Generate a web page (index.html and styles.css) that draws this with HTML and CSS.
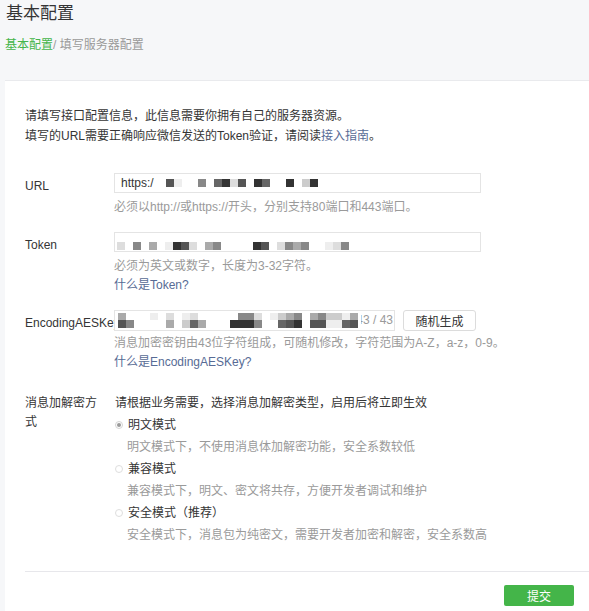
FILE: index.html
```html
<!DOCTYPE html>
<html lang="zh-CN">
<head>
<meta charset="utf-8">
<title>基本配置</title>
<link rel="stylesheet" href="styles.css">
</head>
<body>
<div class="page">
  <header class="head">
    <h2 class="title">基本配置</h2>
    <div class="crumb"><span class="crumb-home">基本配置</span>/ 填写服务器配置</div>
  </header>

  <section class="card">
    <div class="intro">
      <p>请填写接口配置信息，此信息需要你拥有自己的服务器资源。</p>
      <p>填写的URL需要正确响应微信发送的Token验证，请阅读<a class="link">接入指南</a>。</p>
    </div>

    <div class="group">
      <div class="label">URL</div>
      <div class="field">
        <div class="input input-url">
          <span class="val">https:/</span>
          <span class="strip strip-url">
            <i class="g55"></i><i class="gee"></i><i></i><i></i><i class="g88"></i><i></i><i class="g66"></i><i class="g33"></i><i class="gdd"></i><i class="g55"></i><i></i><i class="g33"></i><i class="g66"></i><i></i><i></i><i class="g33"></i><i></i><i class="gcc"></i><i class="g33"></i>
          </span>
        </div>
        <p class="hint">必须以http://或https://开头，分别支持80端口和443端口。</p>
      </div>
    </div>

    <div class="group">
      <div class="label">Token</div>
      <div class="field">
        <div class="input input-token">
          <span class="strip strip-token">
            <i class="gdd"></i><i></i><i class="g88"></i><i></i><i class="gaa"></i><i></i><i class="gee"></i><i class="g33"></i><i class="g55"></i><i class="gdd"></i><i></i><i class="gaa"></i><i class="g88"></i><i></i><i></i><i></i><i></i><i class="g33"></i><i class="g55"></i><i></i><i class="gdd"></i><i class="g88"></i><i class="gaa"></i><i class="g88"></i><i></i><i></i><i class="gee"></i><i class="gdd"></i><i class="g88"></i>
          </span>
        </div>
        <p class="hint">必须为英文或数字，长度为3-32字符。</p>
        <a class="link help">什么是Token?</a>
      </div>
    </div>

    <div class="group">
      <div class="label label-aes">EncodingAESKey</div>
      <div class="field">
        <div class="aes-row">
          <div class="input input-aes">
            <span class="strip2">
              <i class="gaa"></i><i class="g55"></i>
              <i></i><i class="g88"></i>
              <i></i><i></i>
              <i></i><i></i>
              <i class="gee"></i><i></i>
              <i></i><i></i>
              <i class="gdd"></i><i class="gaa"></i>
              <i></i><i></i>
              <i class="gee"></i><i class="gcc"></i>
              <i class="gdd"></i><i class="g66"></i>
              <i></i><i class="gaa"></i>
              <i></i><i></i>
              <i></i><i></i>
              <i></i><i></i>
              <i></i><i class="g33"></i>
              <i class="g88"></i><i class="g33"></i>
              <i class="g88"></i><i class="g33"></i>
              <i class="gdd"></i><i class="g88"></i>
              <i></i><i></i>
              <i class="gee"></i><i></i>
              <i class="gcc"></i><i class="g66"></i>
              <i class="gaa"></i><i class="g55"></i>
              <i class="g88"></i><i class="g33"></i>
              <i></i><i></i>
              <i class="gaa"></i><i class="g55"></i>
              <i class="g88"></i><i class="g55"></i>
              <i class="gcc"></i><i class="gee"></i>
              <i class="gcc"></i><i class="gee"></i>
              <i class="gee"></i><i class="g66"></i>
              <i class="gaa"></i><i class="g55"></i>
            </span>
            <span class="counter">43 / 43</span>
          </div>
          <div class="btn">随机生成</div>
        </div>
        <p class="hint hint-tight">消息加密密钥由43位字符组成，可随机修改，字符范围为A-Z，a-z，0-9。</p>
        <a class="link help">什么是EncodingAESKey?</a>
      </div>
    </div>

    <div class="group group-enc">
      <div class="label label-enc">消息加解密方式</div>
      <div class="field">
        <p class="enc-desc">请根据业务需要，选择消息加解密类型，启用后将立即生效</p>
        <div class="radio"><span class="dot dot-on"></span>明文模式</div>
        <p class="radio-desc">明文模式下，不使用消息体加解密功能，安全系数较低</p>
        <div class="radio"><span class="dot"></span>兼容模式</div>
        <p class="radio-desc">兼容模式下，明文、密文将共存，方便开发者调试和维护</p>
        <div class="radio"><span class="dot"></span>安全模式（推荐）</div>
        <p class="radio-desc">安全模式下，消息包为纯密文，需要开发者加密和解密，安全系数高</p>
      </div>
    </div>

    <div class="footer">
      <div class="submit">提交</div>
    </div>
  </section>
</div>
</body>
</html>
```

FILE: styles.css
```css
html, body {
  margin: 0;
  height: 100%;
  overflow: hidden;
  background: #f6f7f9;
}
body {
  font-family: "Liberation Sans", "Noto Sans CJK SC", sans-serif;
  font-size: 12px;
  color: #353535;
}
.head {
  padding-left: 5px;
}
.title {
  margin: 0;
  padding-left: 1px;
  font-size: 17px;
  font-weight: normal;
  line-height: 28px;
  color: #353535;
}
.crumb {
  margin-top: 7px;
  line-height: 20px;
  color: #9a9a9a;
}
.crumb-home {
  color: #44b549;
}
.card {
  margin: 25px 0 0 5px;
  background: #fff;
  border-top: 1px solid #e9eaed;
  padding: 26px 0 40px 20px;
}
.intro {
  margin-bottom: 27px;
}
.intro p {
  margin: 0;
  line-height: 19.5px;
}
.link {
  color: #576b95;
  text-decoration: none;
}
.group {
  display: flex;
}
.group + .group {
  margin-top: 15px;
}
.group.group-enc {
  margin-top: 20px;
}
.label {
  box-sizing: border-box;
  width: 89px;
  flex: none;
  padding-right: 9px;
  padding-top: 3px;
  line-height: 20px;
  color: #353535;
}
.label-aes {
  line-height: 21px;
  white-space: nowrap;
  overflow: hidden;
}
.label.label-enc {
  line-height: 19.5px;
  padding-top: 1.5px;
}
.field {
  flex: none;
}
.input {
  box-sizing: border-box;
  width: 367px;
  height: 20px;
  border: 1px solid #e4e4e4;
  background: #fff;
  display: flex;
  align-items: center;
  position: relative;
}
.input-url {
  padding-left: 6px;
}
.input-token {
  padding-left: 2px;
}
.val {
  color: #353535;
}
.strip {
  display: flex;
}
.strip i {
  display: block;
  width: 8px;
  height: 8px;
  flex: none;
}
.strip-url {
  margin-left: 12.3px;
}
.strip-token {
  align-self: flex-end;
  margin-bottom: 1px;
}
.aes-row {
  display: flex;
  gap: 8px;
}
.input-aes {
  width: 281px;
  height: 21px;
  padding-left: 3px;
}
.strip2 {
  display: grid;
  grid-template-rows: 7px 8px;
  grid-auto-flow: column;
  grid-auto-columns: 8px;
  background: #fff;
  position: relative;
  z-index: 1;
  padding-right: 3px;
}
.strip2 i {
  display: block;
}
.counter {
  position: absolute;
  right: 1px;
  top: 0;
  line-height: 19px;
  color: #9a9a9a;
}
.btn {
  box-sizing: border-box;
  width: 73px;
  height: 21px;
  border: 1px solid #dcdcdc;
  border-radius: 3px;
  background: #fff;
  display: flex;
  align-items: center;
  justify-content: center;
  color: #353535;
}
.hint {
  margin: 5px 0 0;
  line-height: 19px;
  color: #9a9a9a;
}
.hint.hint-tight {
  margin-top: 3px;
}
.help {
  display: block;
  line-height: 19px;
}
.enc-desc {
  margin: 0;
  line-height: 22px;
  padding-left: 1px;
}
.radio {
  display: flex;
  align-items: center;
  line-height: 22px;
  padding-left: 1px;
}
.dot {
  box-sizing: border-box;
  width: 8px;
  height: 8px;
  border: 1px solid #dedede;
  border-radius: 50%;
  margin-right: 5px;
  display: flex;
  align-items: center;
  justify-content: center;
}
.dot-on {
  border-color: #d4d4d4;
}
.dot-on::after {
  content: "";
  width: 4px;
  height: 4px;
  border-radius: 50%;
  background: #9a9a9a;
}
.radio-desc {
  margin: 0;
  padding-left: 13px;
  line-height: 22px;
  color: #9a9a9a;
}
.footer {
  margin-top: 25px;
  border-top: 1px solid #e7e7eb;
  padding: 13px 15px 0 0;
  display: flex;
  justify-content: flex-end;
}
.submit {
  width: 70px;
  height: 20.5px;
  background: #44b549;
  border-radius: 2px;
  color: #fff;
  display: flex;
  align-items: center;
  justify-content: center;
}

.g33 { background: #333; }
.g55 { background: #555; }
.g66 { background: #666; }
.g88 { background: #888; }
.gaa { background: #aaa; }
.gcc { background: #ccc; }
.gdd { background: #ddd; }
.gee { background: #eee; }
```
